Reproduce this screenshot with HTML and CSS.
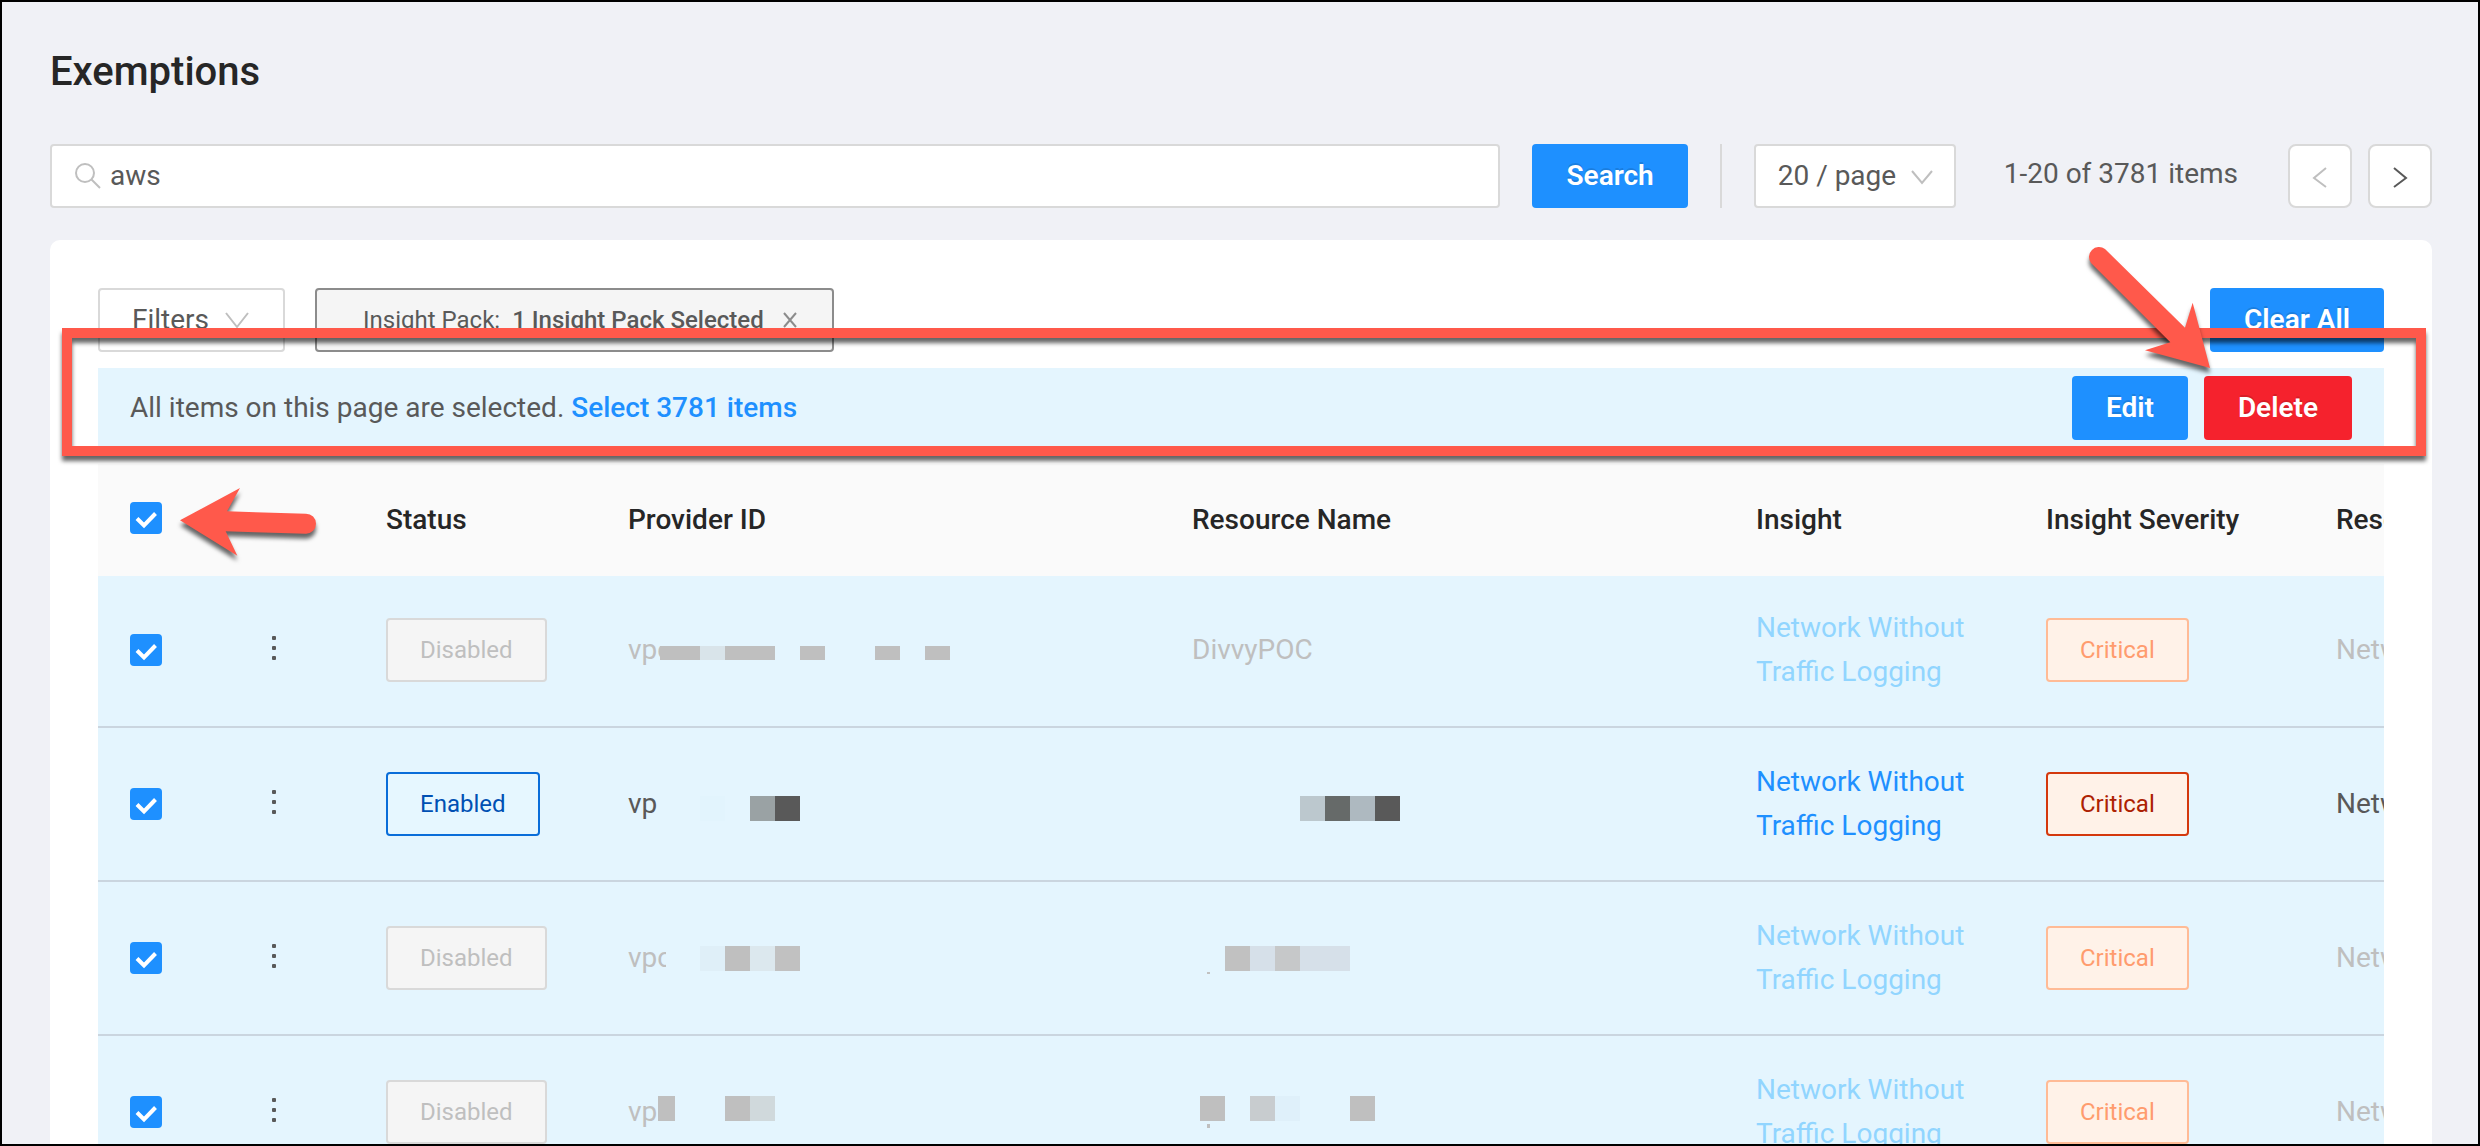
FILE: index.html
```
<!DOCTYPE html>
<html lang="en">
<head>
    <meta charset="UTF-8">
    <meta name="viewport" content="width=device-width, initial-scale=1.0">
    <link rel="stylesheet" href="styles.css">
    <title>Exemptions</title>
</head>
<body>

    <h1>Exemptions</h1>

    <form class="toolbar" onsubmit="return false">
        <div class="search-box">
            <svg class="icon" viewBox="0 0 28 28" width="28" height="28" aria-hidden="true">
                <circle cx="11" cy="11" r="9" />
                <path d="M17.5 17.5L26 26" />
            </svg>
            <input type="text" id="search" value="aws" aria-label="Search exemptions">
        </div>
        <button type="submit" class="btn primary">Search</button>
        <span class="divider"></span>
        <div class="page-size">
            <select id="page-size" aria-label="Items per page">
                <option>20 / page</option>
                <option>50 / page</option>
            </select>
            <svg class="icon chevron" viewBox="0 0 24 24" width="24" height="24" aria-hidden="true"><path d="M2 7L12 19L22 7" /></svg>
        </div>
        <span class="total">1-20 of 3781 items</span>
        <div class="pager">
            <button type="button" class="page-btn" aria-label="Previous page" disabled>
                <svg class="icon" viewBox="0 0 24 24" width="24" height="24"><path d="M18 4L6 14L18 23" /></svg>
            </button>
            <button type="button" class="page-btn" aria-label="Next page">
                <svg class="icon" viewBox="0 0 24 24" width="24" height="24"><path d="M6 4L18 14L6 23" /></svg>
            </button>
        </div>
    </form>

    <main class="card">
        <div class="filters">
            <button type="button" class="filter-btn">Filters
                <svg class="icon" viewBox="0 0 24 24" width="24" height="24" aria-hidden="true"><path d="M1 5L12 19L23 5" /></svg>
            </button>
            <div class="filter-tag">
                <span>Insight Pack:</span>
                <b>1 Insight Pack Selected</b>
                <button type="button" class="tag-close" aria-label="Remove filter">
                    <svg class="icon" viewBox="0 0 16 16" width="16" height="16"><path d="M2 1L14 15M14 1L2 15" /></svg>
                </button>
            </div>
            <button type="button" class="btn primary clear-all">Clear All</button>
        </div>

        <div class="selection-bar">
            <p>All items on this page are selected. <a href="#">Select 3781 items</a></p>
            <button type="button" class="btn primary">Edit</button>
            <button type="button" class="btn danger">Delete</button>
            <div class="highlight"></div>
            <svg class="arrow arrow-delete" viewBox="99 60 402 420" width="134" height="140" aria-hidden="true">
                <path d="M165 87L405 323L428 248L480 444L285 391L361 367L123 129A30 30 0 0 1 165 87Z" />
            </svg>
        </div>

        <div class="table-wrap">
            <table>
                <colgroup>
                    <col class="col-check">
                    <col class="col-menu">
                    <col class="col-status">
                    <col class="col-wide">
                    <col class="col-wide">
                    <col class="col-mid">
                    <col class="col-mid">
                    <col class="col-mid">
                </colgroup>
                <thead>
                    <tr>
                        <th class="check-all">
                            <input type="checkbox" aria-label="Select all" checked>
                            <svg class="arrow arrow-check" viewBox="411 528 426 240" width="142" height="80" aria-hidden="true">
                                <path d="M420 631L600 534L561 604L798 611A30 30 0 0 1 798 671L557 664L592 737Z" />
                            </svg>
                        </th>
                        <th></th>
                        <th>Status</th>
                        <th>Provider ID</th>
                        <th>Resource Name</th>
                        <th>Insight</th>
                        <th>Insight Severity</th>
                        <th>Resource Type</th>
                    </tr>
                </thead>
                <tbody>
                    <tr class="off">
                        <td><input type="checkbox" aria-label="Select row 1" checked></td>
                        <td><button type="button" class="menu" aria-label="Row actions"><i></i><i></i><i></i></button></td>
                        <td><span class="tag">Disabled</span></td>
                        <td>
                            <div class="masked">
                                <span class="clip-short">vpc</span>
                                <svg width="290" height="64" aria-hidden="true">
                                    <path fill="#bfbfbf" d="M0 28h40v14H0zM65 28h50v14H65zM140 28h25v14h-25zM215 28h25v14h-25zM265 28h25v14h-25z" />
                                    <path fill="#d9e4ea" d="M40 28h25v14H40z" />
                                </svg>
                            </div>
                        </td>
                        <td>DivvyPOC</td>
                        <td><a href="#">Network Without Traffic Logging</a></td>
                        <td><span class="tag critical">Critical</span></td>
                        <td>Network</td>
                    </tr>
                    <tr>
                        <td><input type="checkbox" aria-label="Select row 2" checked></td>
                        <td><button type="button" class="menu" aria-label="Row actions"><i></i><i></i><i></i></button></td>
                        <td><span class="tag">Enabled</span></td>
                        <td>
                            <div class="masked">
                                <span class="clip-short">vp</span>
                                <svg width="290" height="64" aria-hidden="true">
                                    <path fill="#e2f4fd" d="M40 24h25v25H40z" />
                                    <path fill="#9aa2a4" d="M90 24h25v25H90z" />
                                    <path fill="#595959" d="M115 24h25v25h-25z" />
                                </svg>
                            </div>
                        </td>
                        <td>
                            <div class="masked">
                                <svg width="290" height="64" aria-hidden="true">
                                    <path fill="#bcc8ce" d="M108 24h25v25h-25z" />
                                    <path fill="#666a69" d="M133 24h25v25h-25z" />
                                    <path fill="#aeb9c0" d="M158 24h25v25h-25z" />
                                    <path fill="#595959" d="M183 24h25v25h-25z" />
                                </svg>
                            </div>
                        </td>
                        <td><a href="#">Network Without Traffic Logging</a></td>
                        <td><span class="tag critical">Critical</span></td>
                        <td>Network</td>
                    </tr>
                    <tr class="off">
                        <td><input type="checkbox" aria-label="Select row 3" checked></td>
                        <td><button type="button" class="menu" aria-label="Row actions"><i></i><i></i><i></i></button></td>
                        <td><span class="tag">Disabled</span></td>
                        <td>
                            <div class="masked">
                                <span class="clip-long">vpc</span>
                                <svg width="290" height="64" aria-hidden="true">
                                    <path fill="#dfeff8" d="M34 20h25v25H34z" />
                                    <path fill="#bfbfbf" d="M59 20h25v25H59z" />
                                    <path fill="#dce8ee" d="M84 20h25v25H84z" />
                                    <path fill="#c1c1c1" d="M109 20h25v25h-25z" />
                                </svg>
                            </div>
                        </td>
                        <td>
                            <div class="masked">
                                <svg width="290" height="64" aria-hidden="true">
                                    <path fill="#c1c1c1" d="M33 20h25v25H33zM15 46h3v2h-3z" />
                                    <path fill="#d6e0e9" d="M58 20h25v25H58zM108 20h50v25h-50z" />
                                    <path fill="#c6c8c9" d="M83 20h25v25H83z" />
                                </svg>
                            </div>
                        </td>
                        <td><a href="#">Network Without Traffic Logging</a></td>
                        <td><span class="tag critical">Critical</span></td>
                        <td>Network</td>
                    </tr>
                    <tr class="off">
                        <td><input type="checkbox" aria-label="Select row 4" checked></td>
                        <td><button type="button" class="menu" aria-label="Row actions"><i></i><i></i><i></i></button></td>
                        <td><span class="tag">Disabled</span></td>
                        <td>
                            <div class="masked">
                                <span class="clip-vp">vp</span>
                                <svg width="290" height="64" aria-hidden="true">
                                    <path fill="#bfbfbf" d="M0 16h17v25H0zM67 16h25v25H67z" />
                                    <path fill="#d0d9dc" d="M92 16h25v25H92z" />
                                </svg>
                            </div>
                        </td>
                        <td>
                            <div class="masked">
                                <svg width="290" height="64" aria-hidden="true">
                                    <path fill="#bfbfbf" d="M8 16h25v25H8zM158 16h25v25h-25zM15 44h3v4h-3z" />
                                    <path fill="#c8cccf" d="M58 16h25v25H58z" />
                                    <path fill="#dff0fa" d="M83 16h25v25H83z" />
                                </svg>
                            </div>
                        </td>
                        <td><a href="#">Network Without Traffic Logging</a></td>
                        <td><span class="tag critical">Critical</span></td>
                        <td>Network</td>
                    </tr>
                </tbody>
            </table>
        </div>
    </main>

</body>
</html>
```

FILE: styles.css
```
* {
    box-sizing: border-box;
}

body {
    height: 100vh;
    margin: 0;
    padding: 46px 46px 0 48px;
    border: 2px solid #000000;
    overflow: hidden;
    background: #f0f1f6;
    color: #595959;
    font-family: Roboto, "Liberation Sans", sans-serif;
    font-size: 28px;
    line-height: 44px;
}

h1 {
    margin: 0 0 48px;
    color: #262626;
    font-size: 40px;
    font-weight: 500;
    line-height: 48px;
}

button, input, select {
    font: inherit;
    color: inherit;
}

button {
    cursor: pointer;
}

a {
    color: #1e90ff;
    text-decoration: none;
}

.icon {
    flex: none;
    fill: none;
    stroke: #bfbfbf;
    stroke-width: 2;
}

.btn {
    height: 64px;
    padding: 0 34px;
    border: none;
    border-radius: 4px;
    color: #ffffff;
    font-weight: 600;
    text-shadow: 0 -2px 0 rgba(0, 0, 0, 0.12);
}

.primary {
    background: #1e90ff;
}

.danger {
    background: #f5222d;
}

/* Search and paging row */
.toolbar {
    display: flex;
    gap: 32px;
    margin-bottom: 32px;
}

.search-box {
    display: flex;
    flex: 1;
    align-items: center;
    gap: 8px;
    height: 64px;
    padding: 0 22px;
    border: 2px solid #d9d9d9;
    border-radius: 4px;
    background: #ffffff;
}

.search-box input {
    flex: 1;
    min-width: 0;
    padding: 0;
    border: none;
    outline: none;
    background: none;
}

.divider {
    width: 2px;
    background: #d9d9d9;
}

.page-size {
    position: relative;
}

.page-size select {
    width: 202px;
    height: 64px;
    padding: 0 22px;
    border: 2px solid #d9d9d9;
    border-radius: 4px;
    background: #ffffff;
    appearance: none;
}

.chevron {
    position: absolute;
    top: 20px;
    right: 22px;
    pointer-events: none;
}

.total {
    margin: 0 18px 0 16px;
    line-height: 60px;
}

.pager {
    display: flex;
    gap: 16px;
}

.page-btn {
    display: flex;
    align-items: center;
    justify-content: center;
    width: 64px;
    height: 64px;
    padding: 0;
    border: 2px solid #d9d9d9;
    border-radius: 8px;
    background: #ffffff;
}

.page-btn:enabled .icon {
    stroke: #595959;
}

/* Card */
.card {
    padding: 48px;
    border-radius: 10px;
    background: #ffffff;
}

.filters {
    display: flex;
    gap: 30px;
    margin-bottom: 16px;
}

.filter-btn {
    display: flex;
    align-items: center;
    gap: 16px;
    height: 64px;
    padding: 0 34px 0 32px;
    border: 2px solid #d9d9d9;
    border-radius: 4px;
    background: #ffffff;
}

.filter-tag {
    display: flex;
    align-items: center;
    height: 64px;
    padding: 0 34px 0 46px;
    border: 2px solid #8c8c8c;
    border-radius: 4px;
    background: #f5f5f5;
    font-size: 24px;
}

.filter-tag b {
    margin: 0 18px 0 12px;
    font-weight: 500;
}

.tag-close {
    display: flex;
    padding: 0;
    border: none;
    background: none;
}

.tag-close .icon {
    stroke: #8c8c8c;
}

.clear-all {
    margin-left: auto;
}

.selection-bar {
    position: relative;
    z-index: 1;
    display: flex;
    align-items: center;
    gap: 16px;
    height: 80px;
    margin-bottom: 16px;
    padding: 0 32px;
    background: #e4f5fe;
}

.selection-bar p {
    flex: 1;
    margin: 0;
}

.selection-bar a {
    font-weight: 500;
}

/* Red call-outs drawn over the page */
.highlight {
    position: absolute;
    top: -40px;
    right: -42px;
    bottom: -8px;
    left: -36px;
    border: 10px solid #ff594b;
    filter: drop-shadow(0 5px 2px rgba(0, 0, 0, 0.6));
    pointer-events: none;
}

.arrow {
    position: absolute;
    overflow: visible;
    fill: #ff594b;
    filter: drop-shadow(0 5px 2px rgba(0, 0, 0, 0.6));
    pointer-events: none;
}

.arrow-delete {
    top: -128px;
    right: 167px;
}

.arrow-check {
    top: 22px;
    left: 79px;
}

/* Table */
.table-wrap {
    overflow: hidden;
}

table {
    width: 2496px;
    table-layout: fixed;
    border-collapse: separate;
    border-spacing: 0;
}

.col-check {
    width: 96px;
}

.col-menu {
    width: 160px;
}

.col-status {
    width: 242px;
}

.col-wide {
    width: 564px;
}

.col-mid {
    width: 290px;
}

th {
    height: 112px;
    padding: 0 32px;
    background: #fafafa;
    color: #262626;
    font-weight: 500;
    text-align: left;
    white-space: nowrap;
}

.check-all {
    position: relative;
    padding-bottom: 4px;
}

td {
    padding: 32px;
    border-bottom: 2px solid #cad5df;
    background: #e4f5fe;
}

tbody tr:first-child td {
    padding-top: 30px;
}

.off {
    color: #bfbfbf;
}

.off a {
    color: #91d5ff;
}

input[type="checkbox"] {
    display: block;
    width: 32px;
    height: 32px;
    margin: 0;
    border-radius: 4px;
    appearance: none;
    background: #1e90ff url("data:image/svg+xml,%3Csvg xmlns='http://www.w3.org/2000/svg' viewBox='0 0 32 32'%3E%3Cpath d='M7 16.5L14 23.5L25.500 11.500' fill='none' stroke='white' stroke-width='4'/%3E%3C/svg%3E");
}

.menu {
    display: flex;
    flex-direction: column;
    gap: 6px;
    margin: 0 auto 4px;
    padding: 8px;
    border: none;
    background: none;
}

.menu i {
    width: 4px;
    height: 4px;
    border-radius: 1px;
    background: #595959;
}

.tag {
    display: inline-block;
    height: 64px;
    padding: 0 32px;
    border: 2px solid #096dd9;
    border-radius: 4px;
    background: #e6f7ff;
    color: #0050b3;
    font-size: 24px;
    line-height: 60px;
    vertical-align: middle;
}

.off .tag {
    border-color: #d9d9d9;
    background: #f5f5f5;
    color: #bfbfbf;
}

.critical {
    border-color: #d4380d;
    background: #fff2e8;
    color: #ad2102;
}

.off .critical {
    border-color: #ffbb96;
    background: #fff2e8;
    color: #ff9c6e;
}

.masked {
    display: flex;
    align-items: center;
}

.masked span {
    overflow: hidden;
}

.clip-short {
    width: 32px;
}

.clip-long {
    width: 38px;
}

.clip-vp {
    width: 30px;
}
```
